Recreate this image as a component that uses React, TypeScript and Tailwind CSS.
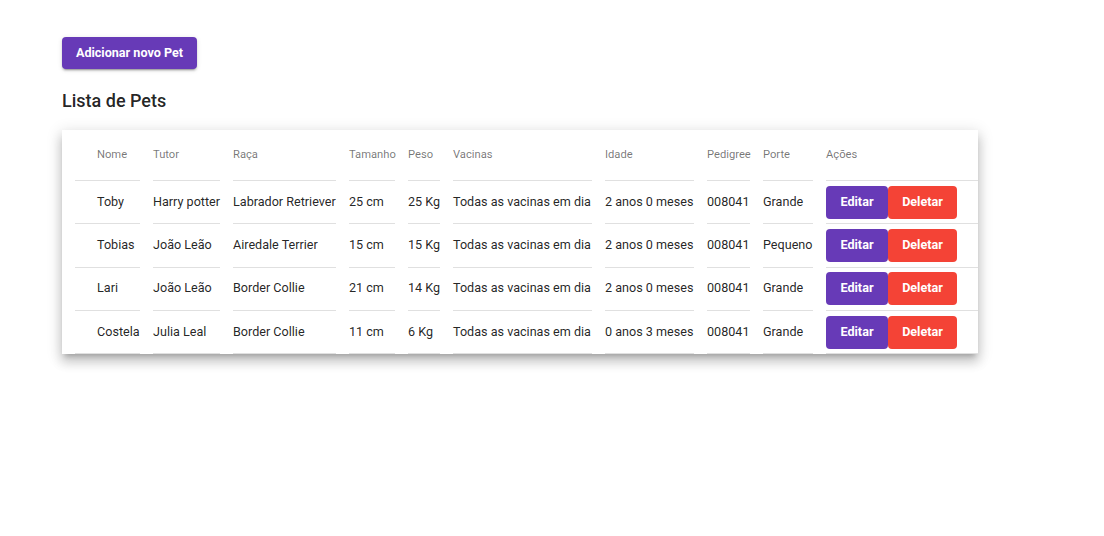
import React from 'react'

type Pet = {
  nome: string
  tutor: string
  raca: string
  tamanho: string
  peso: string
  vacinas: string
  idade: string
  pedigree: string
  porte: string
}

const pets: Pet[] = [
  { nome: 'Toby', tutor: 'Harry potter', raca: 'Labrador Retriever', tamanho: '25 cm', peso: '25 Kg', vacinas: 'Todas as vacinas em dia', idade: '2 anos 0 meses', pedigree: '008041', porte: 'Grande' },
  { nome: 'Tobias', tutor: 'João Leão', raca: 'Airedale Terrier', tamanho: '15 cm', peso: '15 Kg', vacinas: 'Todas as vacinas em dia', idade: '2 anos 0 meses', pedigree: '008041', porte: 'Pequeno' },
  { nome: 'Lari', tutor: 'João Leão', raca: 'Border Collie', tamanho: '21 cm', peso: '14 Kg', vacinas: 'Todas as vacinas em dia', idade: '2 anos 0 meses', pedigree: '008041', porte: 'Grande' },
  { nome: 'Costela', tutor: 'Julia Leal', raca: 'Border Collie', tamanho: '11 cm', peso: '6 Kg', vacinas: 'Todas as vacinas em dia', idade: '0 anos 3 meses', pedigree: '008041', porte: 'Grande' },
]

const cell = 'border-b border-[#e0e0e0] whitespace-nowrap p-0 align-middle'

export default function App() {
  return (
    <div className="min-h-screen bg-white font-['Roboto',sans-serif] text-[rgba(0,0,0,0.87)] pl-[62px] pt-[37px]">
      <button className="h-[32px] w-[135px] rounded bg-[#673ab7] text-white text-[12.6px] font-bold shadow-[0_3px_1px_-2px_rgba(0,0,0,0.2),0_2px_2px_0_rgba(0,0,0,0.14),0_1px_5px_0_rgba(0,0,0,0.12)]">
        Adicionar novo Pet
      </button>

      <h3 className="mt-[20px] text-[18px] font-medium leading-[24px]">Lista de Pets</h3>

      {/* Tabela */}
      <div className="mt-[17px] w-[916px] overflow-hidden bg-white shadow-[0_5px_5px_-3px_rgba(0,0,0,0.2),0_8px_10px_1px_rgba(0,0,0,0.14),0_3px_14px_2px_rgba(0,0,0,0.12)]">
        <table className="table-fixed w-[929px] border-separate border-spacing-x-[13px] border-spacing-y-0 text-left text-[12.6px]">
          <thead>
            <tr className="h-[51px] text-[11.2px] text-[rgba(0,0,0,0.54)]">
              <th className={`${cell} w-[65px] pl-[22px] pt-[1px] font-normal`}>Nome</th>
              <th className={`${cell} w-[67px] pt-[1px] font-normal`}>Tutor</th>
              <th className={`${cell} w-[103px] pt-[1px] font-normal`}>Raça</th>
              <th className={`${cell} w-[46px] pt-[1px] font-normal`}>Tamanho</th>
              <th className={`${cell} w-[32px] pt-[1px] font-normal`}>Peso</th>
              <th className={`${cell} w-[139px] pt-[1px] font-normal`}>Vacinas</th>
              <th className={`${cell} w-[89px] pt-[1px] font-normal`}>Idade</th>
              <th className={`${cell} w-[43px] pt-[1px] font-normal`}>Pedigree</th>
              <th className={`${cell} w-[50px] pt-[1px] font-normal`}>Porte</th>
              <th className={`${cell} w-[152px] pt-[1px] font-normal`}>Ações</th>
            </tr>
          </thead>
          <tbody>
            {pets.map((p, i) => (
              <tr key={i} className="h-[43.3px]">
                <td className={`${cell} pl-[22px]`}>{p.nome}</td>
                <td className={cell}>{p.tutor}</td>
                <td className={cell}>{p.raca}</td>
                <td className={cell}>{p.tamanho}</td>
                <td className={cell}>{p.peso}</td>
                <td className={cell}>{p.vacinas}</td>
                <td className={cell}>{p.idade}</td>
                <td className={cell}>{p.pedigree}</td>
                <td className={cell}>{p.porte}</td>
                <td className={cell}>
                  <div className="flex">
                    <button className="h-[33px] w-[62px] rounded bg-[#673ab7] text-white text-[12.6px] font-bold">Editar</button>
                    <button className="h-[33px] w-[69px] rounded bg-[#f44336] text-white text-[12.6px] font-bold">Deletar</button>
                  </div>
                </td>
              </tr>
            ))}
          </tbody>
        </table>
      </div>
    </div>
  )
}
